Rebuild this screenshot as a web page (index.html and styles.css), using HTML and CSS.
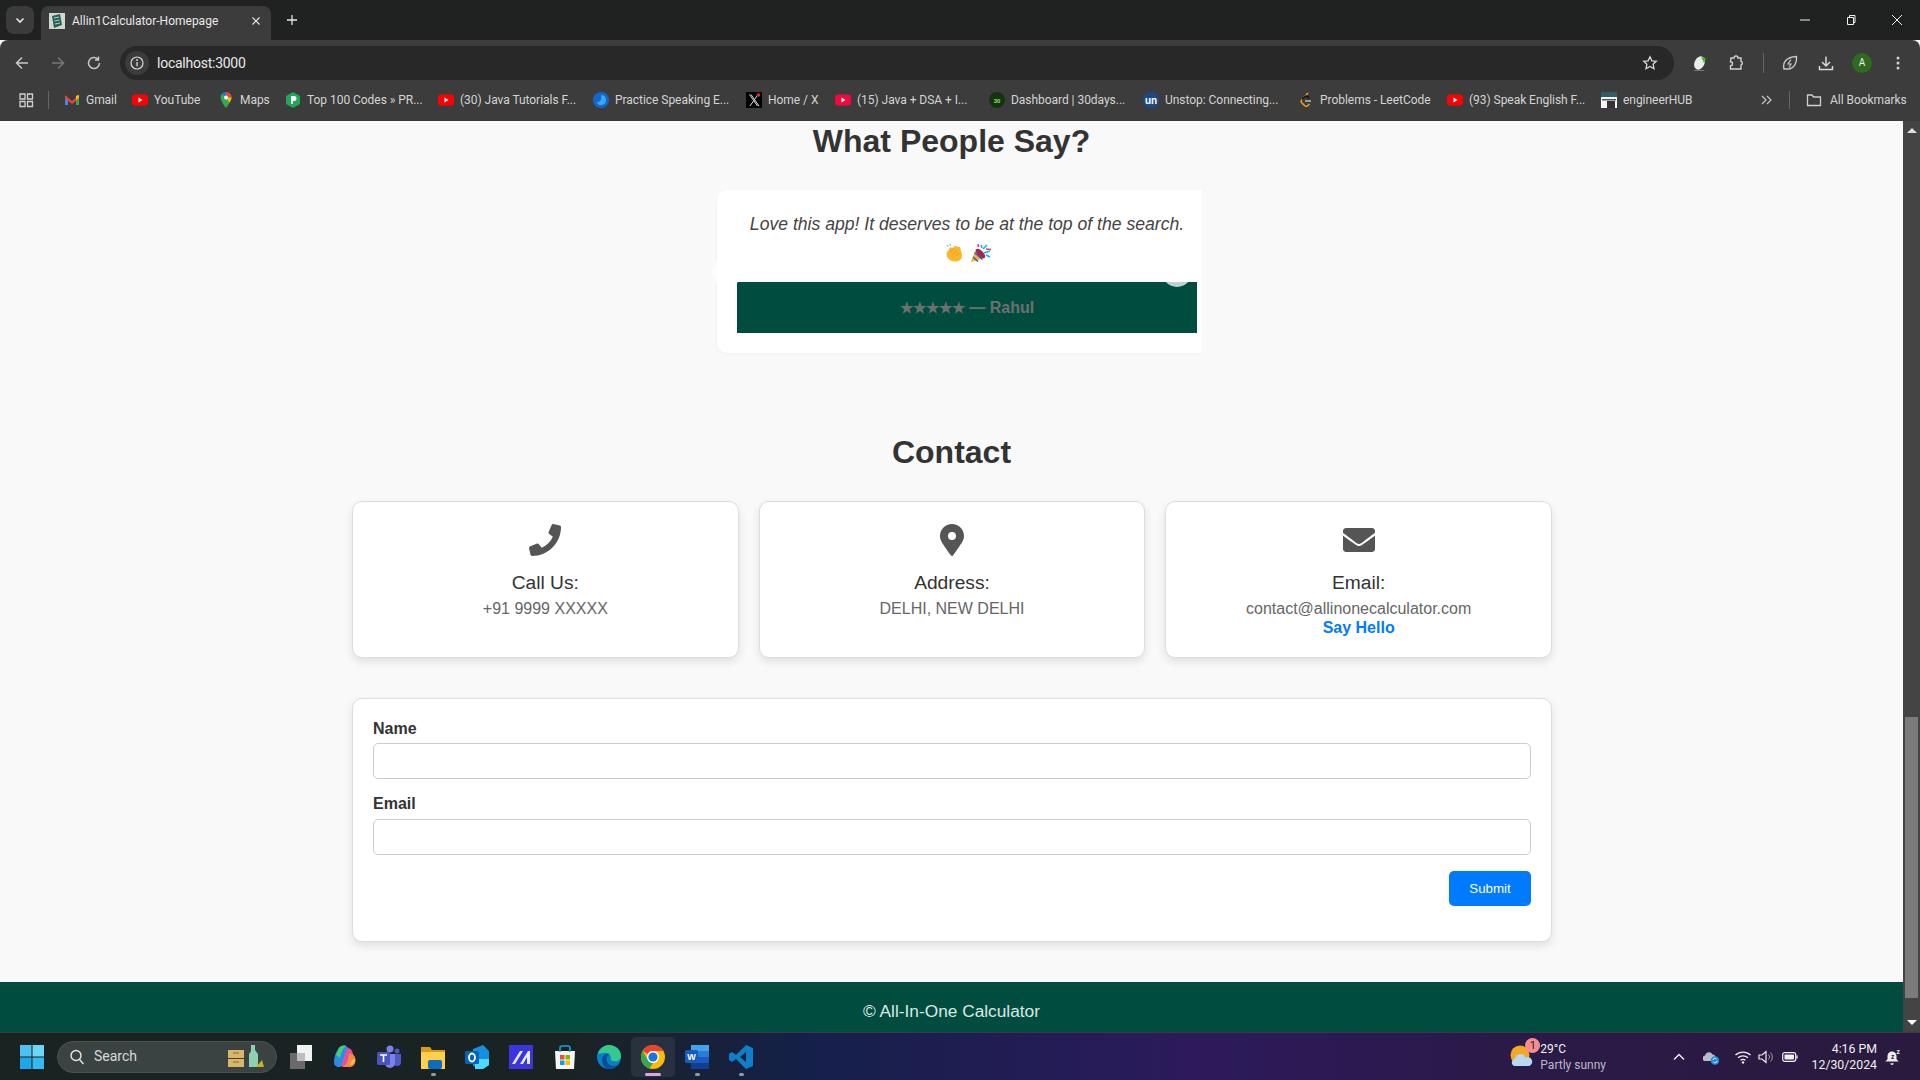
FILE: index.html
```html
<!DOCTYPE html>
<html lang="en">
<head>
<meta charset="utf-8">
<title>Allin1Calculator-Homepage</title>
<link rel="stylesheet" href="styles.css">
</head>
<body>
<header class="chrome">
  <div class="tabstrip">
    <div class="tabmenu"><svg class="ic12" viewBox="0 0 12 12"><path d="M2.500 4.500 6 8l3.500-3.500" fill="none" stroke="#e6e6e6" stroke-width="1.600"/></svg></div>
    <div class="tab">
      <svg class="fav" viewBox="0 0 16 16"><rect width="16" height="16" fill="#cfd8d0"/><path d="M3 3l8-2 2 11-8 3z" fill="#2c5d57"/><path d="M5 5l5-1M5.500 8l5-1M6 11l5-1" stroke="#9ad7c8"/></svg>
      <span class="tabtitle">Allin1Calculator-Homepage</span>
      <svg class="ic10" viewBox="0 0 10 10"><path d="M1.500 1.500l7 7M8.500 1.500l-7 7" stroke="#e8e8e8" stroke-width="1.200"/></svg>
    </div>
    <svg class="newtab" viewBox="0 0 12 12"><path d="M6 1v10M1 6h10" stroke="#e6e6e6" stroke-width="1.300"/></svg>
    <div class="winctl">
      <svg class="ic12" viewBox="0 0 12 12"><path d="M1 6h10" stroke="#f0f0f0"/></svg>
      <svg class="ic12" viewBox="0 0 12 12"><path d="M2.500 3.500h6v7h-6zM4.500 3.500v-2h5.500v7h-1.500" fill="none" stroke="#f0f0f0"/></svg>
      <svg class="ic12" viewBox="0 0 12 12"><path d="M1 1l10 10M11 1L1 11" stroke="#f0f0f0"/></svg>
    </div>
  </div>
  <div class="toolbar">
    <div class="navbtns">
      <svg class="ic16" viewBox="0 0 16 16"><path d="M14 8H2.500M8 2.500 2.500 8 8 13.500" fill="none" stroke="#c8c8c8" stroke-width="1.500"/></svg>
      <svg class="ic16" viewBox="0 0 16 16"><path d="M2 8h11.500M8 2.500 13.500 8 8 13.500" fill="none" stroke="#777" stroke-width="1.500"/></svg>
      <svg class="ic16" viewBox="0 0 16 16"><path d="M13.500 8A5.500 5.500 0 1 1 11.800 4M12.500 1.500V5H9" fill="none" stroke="#c8c8c8" stroke-width="1.500"/></svg>
    </div>
    <div class="omnibox">
      <span class="infochip"><svg class="ic14" viewBox="0 0 14 14"><circle cx="7" cy="7" r="6" fill="none" stroke="#d8d8d8" stroke-width="1.200"/><path d="M7 6v4.200" stroke="#d8d8d8" stroke-width="1.300"/><circle cx="7" cy="4" r=".9" fill="#d8d8d8"/></svg></span>
      <span class="url">localhost:3000</span>
      <svg class="ic16 star" viewBox="0 0 16 16"><path d="M8 1.800l1.900 4 4.400.5-3.200 3 .9 4.400L8 11.500l-4 2.200.9-4.400-3.200-3 4.400-.5z" fill="none" stroke="#d8d8d8" stroke-width="1.300"/></svg>
    </div>
    <div class="tools">
      <span class="toolcell"><svg class="ic16" viewBox="0 0 16 16"><ellipse cx="7.500" cy="8" rx="5" ry="7" transform="rotate(25 7.500 8)" fill="#e8ecef"/><path d="M9 2l5 1.500L12 8z" fill="#3fc01e"/><path d="M2 15.500h10" stroke="#777"/></svg></span>
      <span class="toolcell"><svg class="ic16" viewBox="0 0 16 16"><path d="M3 3h3a2 2 0 0 1 4 0h3v3.500a1.800 1.800 0 0 1 0 3.500V14H2.500v-3.200a2 2 0 0 0 0-4z" fill="none" stroke="#d0d0d0" stroke-width="1.400"/></svg></span>
      <span class="toolsep"></span>
      <span class="toolcell"><svg class="ic16" viewBox="0 0 16 16"><path d="M2 14c-1.500-6 1.500-12 12.500-12.500C15 8 12 14 6 14c-1.500 0-3 0-4 0z" fill="none" stroke="#c8c8c8" stroke-width="1.400"/><path d="M9 4.500 6 9h3l-2 3.500" fill="none" stroke="#c8c8c8" stroke-width="1.200"/></svg></span>
      <span class="toolcell"><svg class="ic16" viewBox="0 0 16 16"><path d="M8 1.500v9M4 7l4 4 4-4M1.500 11v3.500h13V11" fill="none" stroke="#d8d8d8" stroke-width="1.500"/></svg></span>
      <span class="toolcell"><span class="avatar">A</span></span>
      <span class="toolcell"><svg class="ic16" viewBox="0 0 16 16"><circle cx="8" cy="3" r="1.500" fill="#d0d0d0"/><circle cx="8" cy="8" r="1.500" fill="#d0d0d0"/><circle cx="8" cy="13" r="1.500" fill="#d0d0d0"/></svg></span>
    </div>
  </div>
  <nav class="bookmarks">
    <span class="apps"><svg class="ic16" viewBox="0 0 16 16"><path d="M2 2h5v5H2zM9.500 2h5v5h-5zM2 9.500h5v5H2zM9.500 9.500h5v5h-5z" fill="none" stroke="#cfcfcf" stroke-width="1.300"/></svg></span>
    <span class="barsep"></span>
    <a class="bm w68"><svg class="fav" viewBox="0 0 16 16"><path d="M1 4v9h3V7z" fill="#4285f4"/><path d="M15 4v9h-3V7z" fill="#34a853"/><path d="M1 3l7 6 7-6v3.500L8 12 1 6.500z" fill="#ea4335"/><path d="M12 3.800 15 3v3l-3 2z" fill="#fbbc04"/></svg>Gmail</a>
    <a class="bm w86"><svg class="fav" viewBox="0 0 16 16"><rect y="2.500" width="16" height="11" rx="3" fill="#f00"/><path d="M6.500 5.500v5l4-2.500z" fill="#fff"/></svg>YouTube</a>
    <a class="bm w67"><svg class="fav" viewBox="0 0 16 16"><path d="M8 0a5.500 5.500 0 0 0-5.500 5.500C2.500 9.500 8 16 8 16s5.500-6.500 5.500-10.500A5.500 5.500 0 0 0 8 0z" fill="#34a853"/><path d="M8 0a5.500 5.500 0 0 0-4.200 2l4.200 3.500z" fill="#1a73e8"/><path d="M8 0a5.500 5.500 0 0 1 5.500 5.500H8z" fill="#ea4335"/><path d="M13.500 5.500c0 1.500-1 3.500-2 5L8 5.500z" fill="#fbbc04"/><circle cx="8" cy="5.500" r="2" fill="#fff"/></svg>Maps</a>
    <a class="bm w153"><svg class="fav" viewBox="0 0 16 16"><path d="M8 0l7 4v8l-7 4-7-4V4z" fill="#1fa855"/><path d="M6 12V4h3a2.500 2.500 0 0 1 0 5H8v3z" fill="#fff"/></svg>Top 100 Codes » PR...</a>
    <a class="bm w155"><svg class="fav" viewBox="0 0 16 16"><rect y="2.500" width="16" height="11" rx="3" fill="#f00"/><path d="M6.500 5.500v5l4-2.500z" fill="#fff"/></svg>(30) Java Tutorials F...</a>
    <a class="bm w153"><svg class="fav" viewBox="0 0 16 16"><circle cx="8" cy="8" r="8" fill="#1467c8"/><path d="M8 3a5 5 0 1 1-4.500 7C6 11 9 9 8 3z" fill="#39a6f2"/></svg>Practice Speaking E...</a>
    <a class="bm w89"><svg class="fav" viewBox="0 0 16 16"><rect width="16" height="16" fill="#000"/><path d="M3.500 2.500l8 11.500M12 2.500 4 14M5 2.500l8 11.500" stroke="#ddd" fill="none"/><circle cx="12.500" cy="3" r="1.700" fill="#f0252c"/></svg>Home / X</a>
    <a class="bm w154"><svg class="fav" viewBox="0 0 16 16"><rect y="2.500" width="16" height="11" rx="3" fill="#f8063e"/><path d="M6.500 5.500v5l4-2.500z" fill="#fff"/></svg>(15) Java + DSA + I...</a>
    <a class="bm w154"><svg class="fav" viewBox="0 0 16 16"><circle cx="8" cy="8" r="8" fill="#15330f"/><text x="8" y="10.500" text-anchor="middle" class="favtxt30">30</text></svg>Dashboard | 30days...</a>
    <a class="bm w155"><svg class="fav" viewBox="0 0 16 16"><circle cx="8" cy="8" r="8" fill="#1d4a86"/><text x="8" y="11.500" text-anchor="middle" class="favtxtun">un</text></svg>Unstop: Connecting...</a>
    <a class="bm w149"><svg class="fav" viewBox="0 0 16 16"><path d="M10 1 4 7.500a2.500 2.500 0 0 0 0 3.500l2.500 2.500a2.500 2.500 0 0 0 3.500 0l1.500-1.500" fill="none" stroke="#f0a020" stroke-width="1.500"/><path d="M4 7.500l2.500-2.500a2.500 2.500 0 0 1 3.500 0L11.500 6.500" fill="none" stroke="#111" stroke-width="1.500"/><path d="M7 9h6" stroke="#bbb" stroke-width="1.500"/></svg>Problems - LeetCode</a>
    <a class="bm w154"><svg class="fav" viewBox="0 0 16 16"><rect y="2.500" width="16" height="11" rx="3" fill="#f00"/><path d="M6.500 5.500v5l4-2.500z" fill="#fff"/></svg>(93) Speak English F...</a>
    <a class="bm w92"><svg class="fav" viewBox="0 0 16 16"><rect width="16" height="16" fill="#f4f4f4"/><path d="M0 0h16v5H0z" fill="#2f5d68"/><path d="M1 7h14v1.500H1z" fill="#555"/><rect x="6" y="9" width="8" height="7" fill="#333"/></svg>engineerHUB</a>
    <span class="bmspacer"></span>
    <svg class="ic12 more" viewBox="0 0 12 12"><path d="M2 2l4 4-4 4M7 2l4 4-4 4" fill="none" stroke="#c8c8c8" stroke-width="1.200"/></svg>
    <span class="barsep barsep2"></span>
    <a class="bm allbm"><svg class="fav" viewBox="0 0 16 16"><path d="M1.500 3h4.500l1.500 2h7v8.500h-13z" fill="none" stroke="#cfcfcf" stroke-width="1.300"/></svg>All Bookmarks</a>
  </nav>
</header>

<div class="viewport">
  <main class="page">
    <section class="testimonials">
      <h2 class="heading">What People Say?</h2>
      <div class="sliderwrap">
        <div class="slider">
          <span class="dotbtn dotleft"></span>
          <article class="quotecard">
            <p class="quote">Love this app! It deserves to be at the top of the search.</p>
            <p class="emoji">
              <svg class="emo" viewBox="0 0 18 18"><path d="M1.500 9 5.500 3l2 1 3-2.500 2 1.500 2.500 0 1.500 5.500.5 3c0 4-3 6-6.500 6C5 17.500 1 14 1.500 9z" fill="#fbb62c"/><path d="M5.500 8l3.500-3.500M8 10.500l4-4M11 12l3-3" stroke="#e89312" fill="none"/><path d="M2 1l1 2M5 0l.5 2" stroke="#5bb8e8" fill="none"/></svg>
              <svg class="emo emo2" viewBox="0 0 20 18"><path d="M0 18 5 5l9 9z" fill="#f5b32c"/><path d="M2 13l5 4.500M3.500 8.500l8 7" stroke="#3a5fc8" stroke-width="1.600"/><ellipse cx="9.500" cy="9.500" rx="2.800" ry="6" transform="rotate(-45 9.500 9.500)" fill="#a0245e"/><path d="M12 5l4-4M13 9l6-2M10 1l1 3M15 11l4 2" stroke="#12b5e8" stroke-width="1.600"/><path d="M15 5l5 .5M7 0l.5 3" stroke="#f0308c" stroke-width="1.600"/></svg>
            </p>
            <div class="author"><span class="stars">★★★★★</span> — Rahul</div>
          </article>
          <span class="dotbtn dotright"></span>
        </div>
      </div>
    </section>

    <section class="contact">
      <h2 class="heading">Contact</h2>
      <div class="container">
        <div class="infogrid">
          <div class="infocard">
            <svg class="bigicon" viewBox="0 0 512 512"><path d="M493.400 24.600l-104-24c-11.300-2.600-22.900 3.300-27.500 13.900l-48 112c-4.200 9.800-1.400 21.300 6.900 28l60.600 49.600c-36 76.700-98.900 140.500-177.200 177.200l-49.600-60.600c-6.800-8.300-18.200-11.100-28-6.900l-112 48C3.900 366.500-2 378.100.6 389.400l24 104C27.100 504.200 36.700 512 48 512c256.100 0 464-207.500 464-464 0-11.200-7.700-20.900-18.600-23.400z"/></svg>
            <h3 class="infotitle">Call Us:</h3>
            <p class="infotext">+91 9999 XXXXX</p>
          </div>
          <div class="infocard">
            <svg class="bigicon" viewBox="0 0 384 512"><path fill-rule="evenodd" d="M172.268 501.670C26.970 291.031 0 262.514 0 192 0 85.961 85.961 0 192 0s192 85.961 192 192c0 70.514-26.970 99.031-172.268 309.670-9.535 13.774-29.930 13.773-39.464 0zM192 256a64 64 0 1 0 0-128 64 64 0 0 0 0 128z"/></svg>
            <h3 class="infotitle">Address:</h3>
            <p class="infotext">DELHI, NEW DELHI</p>
          </div>
          <div class="infocard">
            <svg class="bigicon" viewBox="0 0 512 512"><path d="M502.300 190.800c3.900-3.100 9.700-.2 9.700 4.700V400c0 26.500-21.500 48-48 48H48c-26.500 0-48-21.500-48-48V195.600c0-5 5.700-7.800 9.700-4.700 22.400 17.400 52.100 39.500 154.100 113.600 21.100 15.400 56.700 47.800 92.200 47.600 35.700.3 72-32.800 92.300-47.600 102-74.100 131.600-96.300 154-113.700zM256 320c23.200.4 56.600-29.200 73.400-41.400 132.700-96.300 142.800-104.700 173.400-128.700 5.800-4.500 9.200-11.500 9.200-18.900v-19c0-26.500-21.500-48-48-48H48C21.500 64 0 85.500 0 112v19c0 7.400 3.400 14.300 9.200 18.900 30.600 23.900 40.700 32.400 173.400 128.700 16.800 12.200 50.200 41.800 73.400 41.400z"/></svg>
            <h3 class="infotitle">Email:</h3>
            <p class="infotext">contact@allinonecalculator.com</p>
            <a class="hello">Say Hello</a>
          </div>
        </div>
        <form class="formcard">
          <label class="lbl">Name</label>
          <input class="field" type="text">
          <label class="lbl">Email</label>
          <input class="field" type="text">
          <div class="formactions"><button class="submit" type="button">Submit</button></div>
        </form>
      </div>
    </section>

    <footer class="sitefooter">© All-In-One Calculator</footer>
  </main>
  <aside class="scrollbar">
    <span class="arrow arrowup"></span>
    <span class="track"><span class="thumb"></span></span>
    <span class="arrow arrowdown"></span>
  </aside>
</div>

<div class="taskbar">
  <span class="start"><svg class="ic24" viewBox="0 0 24 24"><path d="M0 0h11.500v11.500H0z" fill="#4cc2f1"/><path d="M12.500 0H24v11.500H12.500z" fill="#6fd6f7"/><path d="M0 12.500h11.500V24H0z" fill="#1ea6ea"/><path d="M12.500 12.500H24V24H12.500z" fill="#36b8f0"/></svg></span>
  <div class="searchpill">
    <svg class="ic16" viewBox="0 0 16 16"><circle cx="7" cy="6.500" r="5" fill="none" stroke="#e6e6e6" stroke-width="1.400"/><path d="M10.500 10.500l4 4.500" stroke="#e6e6e6" stroke-width="1.400"/></svg>
    <span class="searchtxt">Search</span>
    <svg class="searchart" viewBox="0 0 36 24"><path d="M0 5h16v8H0zM0 14h16v8H0z" fill="#d8b66a"/><path d="M5 8h6M5 17h6" stroke="#8a6a2a"/><path d="M23 0h4v5l3 4v13H21V9l2-3z" fill="#8fd0b0"/><path d="M28 22l6-7 2 7z" fill="#c9b02a"/></svg>
  </div>
  <div class="apprun">
    <span class="app"><svg class="ic24" viewBox="0 0 24 24"><rect x="1" y="8" width="15" height="16" fill="#6a6a6a"/><rect x="8" y="0" width="15" height="16" fill="#f2f2f2"/><rect x="8" y="8" width="8" height="8" fill="#bdbdbd"/></svg></span>
    <span class="app"><svg class="ic24" viewBox="0 0 24 24"><path d="M8 1c3-1 6-1 7 2l-6 18c-3 2-8 1-8-4 0-6 3-13 7-16z" fill="#2b8ce6"/><path d="M8 21 14 3c3 0 4 1 5 3l3 9c1 5-3 8-7 7z" fill="#e04fa0"/><path d="M16 9c3-1 6 1 6.500 5 .5 5-3 8-8 8H8c5-1 7-5 8-13z" fill="#f58a3c"/><path d="M6 3c2-2 4-3 7-2-3 2-5 7-6 12L3 10z" fill="#3fd07a"/><path d="M17 20c3 0 5-3 5-6l-3 1z" fill="#f5c83c"/></svg></span>
    <span class="app"><svg class="ic24" viewBox="0 0 24 24"><circle cx="13" cy="4" r="3.500" fill="#7b83eb"/><circle cx="20" cy="6" r="2.500" fill="#5059c9"/><path d="M16 9h8v8a4 4 0 0 1-8 0z" fill="#5059c9"/><path d="M8 9h10v9a5 5 0 0 1-10 0z" fill="#7b83eb"/><rect x="0" y="7" width="13" height="13" rx="1.500" fill="#4b53bc"/><path d="M3 10h7M6.500 10v7" stroke="#fff" stroke-width="1.600"/></svg></span>
    <span class="app"><svg class="ic24" viewBox="0 0 24 24"><path d="M0 2h9l2 3h13v3H0z" fill="#d99a16"/><path d="M0 7h24v17H0z" fill="#ffd04a"/><rect x="7" y="15" width="14" height="9" rx="2" fill="#0f6cbd"/></svg><i class="rundot"></i></span>
    <span class="app"><svg class="ic24" viewBox="0 0 24 24"><path d="M8 4l10-4 6 6v14l-6 4-10-3z" fill="#1490df"/><path d="M10 14h14v6l-6 4H10z" fill="#50d9ff"/><rect x="0" y="6" width="14" height="13" rx="1.500" fill="#0364b8"/><ellipse cx="7" cy="12.500" rx="3" ry="4" fill="none" stroke="#fff" stroke-width="1.800"/></svg></span>
    <span class="app"><svg class="ic24" viewBox="0 0 24 24"><rect width="24" height="24" fill="#3a35e0"/><path d="M3 19 11 6h3L6 19zM11 19 19 6h2v13h-3v-7l-4 7z" fill="#e8ecff"/></svg></span>
    <span class="app"><svg class="ic24" viewBox="0 0 24 24"><path d="M2 6h20l-1 18H3z" fill="#f5f5f5"/><path d="M7 7V3a2 2 0 0 1 2-2h6a2 2 0 0 1 2 2v4" fill="none" stroke="#16a0e0" stroke-width="1.600"/><rect x="7" y="10" width="4.500" height="4.500" fill="#f25022"/><rect x="12.500" y="10" width="4.500" height="4.500" fill="#7fba00"/><rect x="7" y="15.500" width="4.500" height="4.500" fill="#00a4ef"/><rect x="12.500" y="15.500" width="4.500" height="4.500" fill="#ffb900"/></svg></span>
    <span class="app"><svg class="ic24" viewBox="0 0 24 24"><circle cx="12" cy="12" r="12" fill="#0c7fc4"/><path d="M1 9C3 2 9 0 12 0c7 0 12 5 12 11 0 4-4 6-7 5-3 0-4-2-3-4-1-3-4-5-7-4-3 0-5 1-6 1z" fill="#35c98e"/><path d="M5 15c0-4 4-7 7-6-2 2-3 4-2 7 1 4 6 7 11 3-3 4-7 5-10 5-4-1-6-5-6-9z" fill="#0a4f9c"/></svg></span>
    <span class="app appactive"><svg class="ic24" viewBox="0 0 24 24"><circle cx="12" cy="12" r="12" fill="#fbbc04"/><path d="M12 0a12 12 0 0 1 10.400 6H12a6 6 0 0 0-5.200 3L1.600 6A12 12 0 0 1 12 0z" fill="#ea4335"/><path d="M1.600 6 6.800 15a6 6 0 0 0 5.200 3l-3.500 5.500A12 12 0 0 1 1.600 6z" fill="#34a853"/><circle cx="12" cy="12" r="6" fill="#fff"/><circle cx="12" cy="12" r="4.600" fill="#1a73e8"/></svg><i class="rundot rundotactive"></i></span>
    <span class="app"><svg class="ic24" viewBox="0 0 24 24"><path d="M6 0h16a2 2 0 0 1 2 2v20a2 2 0 0 1-2 2H6z" fill="#2b7cd3"/><path d="M6 0h18v6H6z" fill="#41a5ee"/><path d="M6 12h18v6H6z" fill="#185abd"/><path d="M6 18h18v6H6z" fill="#103f91"/><rect y="5" width="13" height="13" rx="1.500" fill="#185abd"/><text x="6.500" y="15" text-anchor="middle" class="favtxtw">W</text></svg><i class="rundot"></i></span>
    <span class="app"><svg class="ic24" viewBox="0 0 24 24"><path d="M17 0l7 3v18l-7 3L7 14l-4 3-3-2V9l3-2 4 3zM17 7l-6 5 6 5z" fill="#0f7fcc"/></svg><i class="rundot"></i></span>
  </div>
  <div class="tray">
    <div class="weather">
      <span class="weathericon">
        <svg class="ic24" viewBox="0 0 24 24"><circle cx="10" cy="10" r="9.500" fill="#f5a623"/><path d="M4 21a4 4 0 0 1 1-7.500 5.500 5.500 0 0 1 10.500-1 4.500 4.500 0 0 1 4 8.500z" fill="#b6d8f2"/></svg>
        <span class="badge">1</span>
      </span>
      <span class="weathertxt"><span class="temp">29°C</span><span class="cond">Partly sunny</span></span>
    </div>
    <div class="trayicons">
      <svg class="ic14 trayup" viewBox="0 0 14 14"><path d="M2 9.500 7 4.500l5 5" fill="none" stroke="#eee" stroke-width="1.400"/></svg>
      <svg class="ic16 trayod" viewBox="0 0 16 16"><path d="M1 12a3 3 0 0 1 1-5.500 4 4 0 0 1 7.500-1 3 3 0 0 1 3 3.500l-2 3z" fill="#b8bcc4"/><circle cx="12" cy="11.500" r="4.300" fill="#1c8ce0"/><path d="M10 11a2 2 0 0 1 3.500-1M14 12a2 2 0 0 1-3.500 1" stroke="#fff" fill="none"/></svg>
      <svg class="ic16 traywifi" viewBox="0 0 16 16"><path d="M.5 6a11 11 0 0 1 15 0M3 8.800a7.500 7.500 0 0 1 10 0M5.500 11.300a4 4 0 0 1 5 0" fill="none" stroke="#eee" stroke-width="1.300"/><circle cx="8" cy="13.500" r="1.200" fill="#eee"/></svg>
      <svg class="ic16 trayvol" viewBox="0 0 16 16"><path d="M1 6h3l4-3.500v11L4 10H1z" fill="none" stroke="#eee" stroke-width="1.200"/><path d="M10.500 5.500a3.500 3.500 0 0 1 0 5M12.500 3.500a6.500 6.500 0 0 1 0 9" fill="none" stroke="#999"/></svg>
      <svg class="ic16 traybat" viewBox="0 0 16 16"><rect x=".7" y="3.700" width="13" height="8.600" rx="2" fill="none" stroke="#eee" stroke-width="1.200"/><rect x="2.500" y="5.500" width="9.500" height="5" rx=".8" fill="#eee"/><path d="M15 6.500v3" stroke="#eee" stroke-width="1.300"/></svg>
    </div>
    <div class="clock"><span>4:16 PM</span><span>12/30/2024</span></div>
    <svg class="traybell" viewBox="0 0 16 16"><path d="M8 3a4 4 0 0 0-4 4v3l-2 2h12l-2-2V7a4 4 0 0 0-4-4z" fill="#eee"/><path d="M6.500 13.500h3a1.500 1.500 0 0 1-3 0z" fill="#eee"/><text x="8.500" y="9.500" class="favtxtz" text-anchor="middle">z</text><text x="13.500" y="5" class="favtxtz2" text-anchor="middle">z</text></svg>
  </div>
</div>
</body>
</html>
```
FILE: styles.css
```css
* { box-sizing: border-box; }
html, body { margin: 0; padding: 0; }
body {
  width: 1920px; height: 1080px; overflow: hidden;
  display: flex; flex-direction: column;
  font-family: "Liberation Sans", Arial, sans-serif;
  background: #f9f9f9;
}
svg { display: block; flex: none; }
.ic10 { width: 10px; height: 10px; }
.ic12 { width: 12px; height: 12px; }
.ic14 { width: 14px; height: 14px; }
.ic16 { width: 16px; height: 16px; }
.ic24 { width: 24px; height: 24px; }
.fav { width: 16px; height: 16px; }

/* browser chrome */
.chrome { flex: none; font-family: Roboto, "Liberation Sans", sans-serif; color: #e4e4e4; }
.tabstrip { height: 40px; background: #202221; display: flex; align-items: flex-end; padding-left: 6px; }
.tabmenu { width: 28px; height: 28px; margin-bottom: 6px; background: #3b3b3b; border-radius: 8px; display: flex; align-items: center; justify-content: center; }
.tab { width: 230px; height: 34px; margin-left: 7px; background: #3c3c3c; border-radius: 8px 8px 0 0; display: flex; align-items: center; padding: 0 10px 5px 8px; }
.tabtitle { flex: 1; margin-left: 7px; font-size: 12px; color: #e8e8e8; white-space: nowrap; }
.newtab { width: 12px; height: 12px; margin: 0 0 14px 15px; }
.winctl { margin-left: auto; width: 138px; height: 40px; display: flex; align-items: center; justify-content: space-between; padding: 0 17px; }
.toolbar { height: 40px; background: #3c3c3c; border-radius: 8px 8px 0 0; display: flex; padding-top: 6px; }
.navbtns { width: 120px; height: 34px; display: flex; align-items: center; gap: 20px; padding-left: 14px; }
.omnibox { width: 1554px; height: 34px; background: #282828; border-radius: 17px; display: flex; align-items: center; padding: 0 16px 0 5px; }
.infochip { width: 24px; height: 24px; border-radius: 50%; background: #3c3c3c; display: flex; align-items: center; justify-content: center; }
.url { margin-left: 8px; font-size: 14px; color: #e8e8e8; flex: 1; letter-spacing: -.25px; }
.tools { flex: 1; height: 34px; display: flex; align-items: center; padding-left: 8px; }
.toolcell { width: 36px; height: 34px; display: flex; align-items: center; justify-content: center; }
.toolsep { width: 1px; height: 20px; background: #666; margin: 0 8px 0 9px; }
.avatar { width: 20px; height: 20px; border-radius: 50%; background: #2f6a1f; color: #eee; font-size: 10px; line-height: 20px; text-align: center; }
.bookmarks { height: 41px; background: #3c3c3c; border-bottom: 1px solid #3a3a3a; display: flex; align-items: center; padding-bottom: 1px; }
.apps { width: 48px; padding-left: 18px; }
.barsep { width: 1px; height: 18px; background: #666; }
.bm { display: flex; align-items: center; gap: 6px; font-size: 12px; letter-spacing: -.04px; color: #d4d4d4; white-space: nowrap; overflow: hidden; }
.apps + .barsep { margin-right: 15px; }
.w67 { width: 67px; }
.w68 { width: 68px; }
.w86 { width: 86px; }
.w89 { width: 89px; }
.w92 { width: 92px; }
.w149 { width: 149px; }
.w153 { width: 153px; }
.w154 { width: 154px; }
.w155 { width: 155px; }
.bmspacer { flex: 1; }
.more { margin-right: 17px; }
.barsep2 { margin-right: 16px; }
.allbm { width: 114px; gap: 8px; }

/* page */
.viewport { flex: 1; min-height: 0; display: flex; }
.page { flex: 1; min-width: 0; background: #f9f9f9; overflow: hidden; color: #333; }
.heading { margin: 0; font-size: 32px; line-height: 37px; font-weight: 700; text-align: center; color: #333; }
.testimonials { padding-top: 2px; }
.sliderwrap { display: flex; justify-content: center; padding-left: 16px; margin-top: 30px; }
.slider { position: relative; width: 485px; }
.quotecard { position: relative; background: #fff; border-radius: 10px 0 0 10px; padding: 20px 5px 20px 20px; height: 163px; text-align: center; box-shadow: -1px 1px 3px rgba(0,0,0,.03); }
.quote { margin: 0; font-size: 17.600px; line-height: 29px; font-style: italic; color: #444; white-space: nowrap; }
.emoji { margin: 0; height: 29px; padding: 0 0 2px 2px; display: flex; justify-content: center; align-items: center; gap: 8px; }
.emo { width: 18px; height: 18px; }
.emo2 { width: 20px; }
.author { margin-top: 14px; height: 51px; line-height: 51px; background: #004d40; color: #6f6f6f; font-size: 16px; font-weight: 700; }
.stars { font-size: 14.500px; }
.dotbtn { position: absolute; width: 30px; height: 30px; border-radius: 50%; background: rgba(255,255,255,.75); top: 67px; z-index: 1; }
.dotleft { left: -5px; }
.dotright { right: 10px; top: 67px; }
.contact { padding-top: 81px; }
.container { width: 1200px; margin: 30px 0 0 352px; }
.infogrid { display: grid; grid-template-columns: repeat(3, 1fr); gap: 20px; }
.infocard { height: 157px; background: #fff; border: 1px solid #ddd; border-radius: 10px; box-shadow: 0 4px 8px rgba(0,0,0,.1); padding: 22px 20px 0; text-align: center; display: flex; flex-direction: column; align-items: center; }
.bigicon { height: 32px; width: 32px; fill: #555; }
.infotitle { margin: 15px 0 0; font-size: 19.200px; line-height: 23px; font-weight: 400; color: #333; }
.infotext { margin: 6px 0 0; font-size: 16px; line-height: 18px; color: #666; }
.hello { font-size: 16px; line-height: 20px; font-weight: 700; color: #007bff; }
.formcard { margin-top: 40px; height: 244px; background: #fff; border: 1px solid #ddd; border-radius: 10px; box-shadow: 0 4px 8px rgba(0,0,0,.1); padding: 21px 20px 20px; display: flex; flex-direction: column; }
.lbl { display: block; font-size: 16px; line-height: 18px; font-weight: 700; color: #333; margin-bottom: 5px; }
.field { display: block; width: 100%; height: 36px; flex: none; margin: 0 0 16px; border: 1px solid #ccc; border-radius: 5px; background: #fff; padding: 8px; }
.field + .lbl { margin-bottom: 6px; }
.formactions { display: flex; justify-content: flex-end; }
.submit { width: 82px; height: 35px; border: 0; border-radius: 5px; background: #007bff; color: #fff; font-family: "Liberation Sans", Arial, sans-serif; font-size: 13.330px; padding: 0; }
.sitefooter { margin-top: 40px; height: 60px; padding-top: 19px; background: #004d40; color: #dce8e5; text-align: center; font-size: 17.300px; line-height: 20px; }
.scrollbar { flex: none; width: 17px; background: #444; display: flex; flex-direction: column; align-items: center; }
.arrow { flex: none; width: 0; height: 0; border-left: 5px solid transparent; border-right: 5px solid transparent; margin: 7px 0; }
.arrowup { border-bottom: 5px solid #ddd; }
.arrowdown { border-top: 5px solid #fff; margin-top: 8px; }
.track { flex: 1; width: 13px; display: flex; flex-direction: column; justify-content: flex-end; padding-bottom: 14px; }
.thumb { height: 281px; background: #7b7b7b; }

/* taskbar */
.taskbar { flex: none; height: 48px; border-top: 1px solid #3c3a40; background: linear-gradient(90deg, #1a2322 0, #1a2324 30%, #15204a 42%, #2c1a5c 62%, #2a1a48 78%, #2a1a3e 100%); display: flex; align-items: center; padding-left: 20px; font-family: Roboto, "Liberation Sans", sans-serif; color: #f0f0f0; }
.start { width: 24px; margin-right: 13px; }
.searchpill { width: 220px; height: 32px; border-radius: 16px; background: #3b4342; border: 1px solid #4b5352; display: flex; align-items: center; padding: 0 6px 0 11px; gap: 9px; }
.searchtxt { flex: 1; font-size: 14px; color: #d8d8d8; padding-bottom: 1px; }
.searchart { width: 36px; height: 24px; margin-left: -6px; margin-right: 6px; }
.apprun { display: flex; margin-left: 2px; }
.app { position: relative; width: 44px; height: 40px; display: flex; align-items: center; justify-content: center; }
.appactive { background: rgba(255,255,255,.07); border-radius: 5px; }
.rundot { position: absolute; left: 20px; bottom: 1px; width: 5px; height: 3px; border-radius: 2px; background: #9a9a9a; }
.rundotactive { left: 14px; width: 16px; background: #d8a8e0; }
.tray { margin-left: auto; display: flex; align-items: center; height: 47px; }
.weather { display: flex; align-items: center; gap: 6px; }
.weathericon { position: relative; }
.badge { position: absolute; top: -7px; right: -6px; width: 15px; height: 15px; border-radius: 50%; background: #f58d8f; color: #222; font-size: 11px; line-height: 15px; text-align: center; }
.weathertxt { display: flex; flex-direction: column; font-size: 12px; line-height: 16px; }
.cond { color: #bdb7c8; }
.trayicons { display: flex; align-items: center; margin-left: 66px; }
.trayod { margin-left: 17px; }
.traywifi { margin-left: 16px; }
.trayvol { margin-left: 7px; }
.traybat { margin-left: 8px; }
.clock { width: 70px; margin-left: 9px; display: flex; flex-direction: column; align-items: flex-end; font-size: 12.300px; line-height: 16px; }
.traybell { width: 18px; height: 18px; margin: 0 19px 0 6px; }
.favtxt30 { font: 700 6px "Liberation Sans", sans-serif; fill: #8fe06a; }
.favtxtun { font: 700 10px "Liberation Sans", sans-serif; fill: #fff; }
.favtxtw { font: 700 9px "Liberation Sans", sans-serif; fill: #fff; }
.favtxtz { font: 700 6px "Liberation Sans", sans-serif; fill: #222; }
.favtxtz2 { font: 700 6px "Liberation Sans", sans-serif; fill: #eee; }
```
